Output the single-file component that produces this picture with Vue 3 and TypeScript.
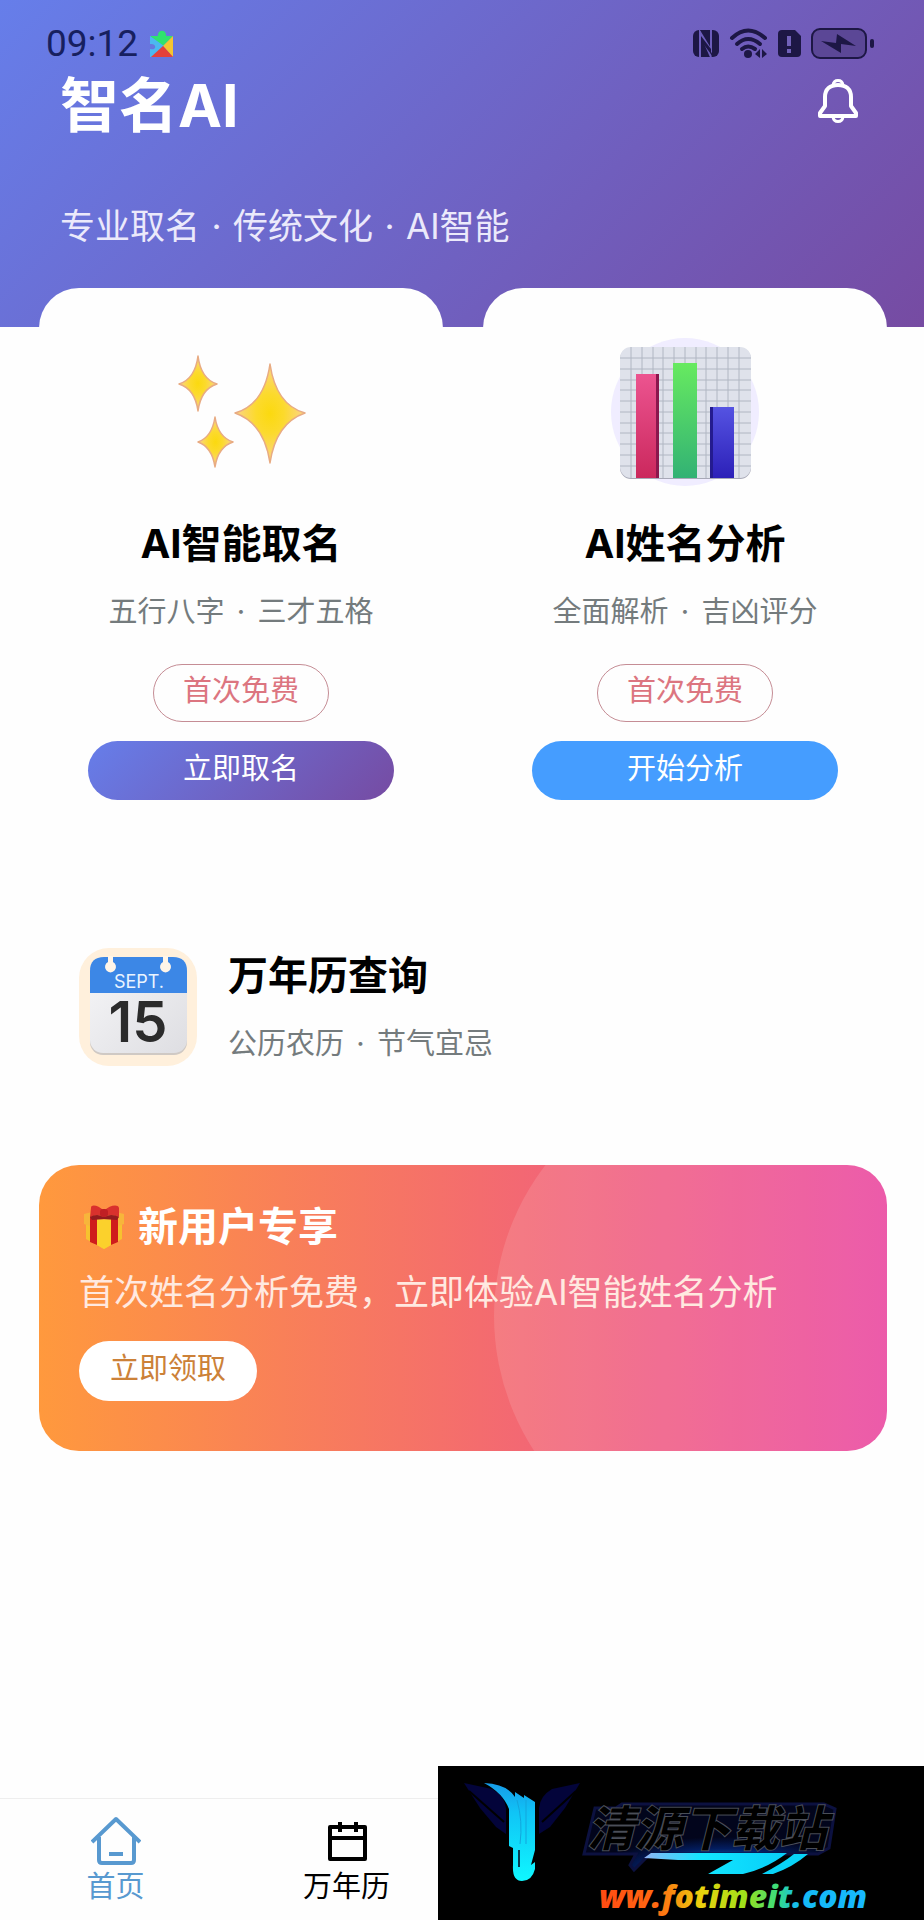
<script setup lang="ts">
interface Feature {
  id: 'naming' | 'analysis'
  title: string
  tags: [string, string]
  badge: string
  action: string
}

const slogan: string[] = ['专业取名', '传统文化', 'AI智能']

const features: Feature[] = [
  { id: 'naming', title: 'AI智能取名', tags: ['五行八字', '三才五格'], badge: '首次免费', action: '立即取名' },
  { id: 'analysis', title: 'AI姓名分析', tags: ['全面解析', '吉凶评分'], badge: '首次免费', action: '开始分析' },
]

const calendarTags: string[] = ['公历农历', '节气宜忌']

const gridLines: number[] = [12, 23, 34, 44, 55, 66, 77, 87, 98, 109, 120]
</script>

<template>
  <div class="page">
    <header class="hero">
      <div class="status">
        <span class="clock">09:12</span>
        <svg class="puzzle" viewBox="0 0 24 28" aria-hidden="true">
          <path d="M0 6H8C7-1 17-1 16 6H23L13 16 0 6Z" fill="#2fe36e" />
          <path d="M0 6 14 16 2 27H0V19C7 21 7 13 0 14Z" fill="#4cb8f0" />
          <path d="M23 6V27L13 16Z" fill="#f5c531" />
          <path d="M1 27 13 16 23 27Z" fill="#e5403b" />
        </svg>
        <svg class="indicators" viewBox="0 0 182 34" aria-hidden="true">
          <g fill="#1d1745">
            <rect x="0" y="3" width="26" height="27" rx="6" />
            <path d="M7 30V5L18 23V3M7 5 18 30" fill="none" stroke="#6c5dbb" stroke-width="2" />
            <path d="M8 9 18 22V27L8 14Z" />
            <g fill="none" stroke="#1d1745" stroke-width="4" stroke-linecap="round">
              <path d="M39 11Q55-4 72 11" />
              <path d="M44 17Q55 7 67 17" />
              <path d="M49 22Q55 17 62 22" />
            </g>
            <circle cx="55" cy="27" r="4" />
            <path d="M67 22V31L62 27ZM69 22V31L74 27Z" />
            <path d="M89 3H102L108 9V26Q108 30 104 30H89Q85 30 85 26V7Q85 3 89 3Z" />
            <path d="M96 9V19M96 22V26" stroke="#7161b9" stroke-width="4" />
            <rect x="119" y="2" width="54" height="29" rx="8" fill="#5b4796" stroke="#1d1745" stroke-width="2" />
            <path d="M128 14 143 16 144 7 163 19 148 17 148 26Z" />
            <rect x="177" y="12" width="4" height="9" rx="2" />
          </g>
        </svg>
      </div>
      <div class="hero-row">
        <h1>智名AI</h1>
        <button class="bell" type="button" aria-label="消息通知">
          <svg viewBox="0 0 40 46" aria-hidden="true">
            <g fill="none" stroke="#fff" stroke-width="4" stroke-linejoin="round">
              <path d="M7 19C7 11 12 7 20 7S33 11 33 19V28L38 35V38H2V35L7 28Z" />
              <path d="M15 7C16 1 24 1 25 7M15 39C16 45 24 45 25 39" stroke-width="3" />
            </g>
          </svg>
        </button>
      </div>
      <p class="slogan">
        <template v-for="(part, i) in slogan" :key="part"><span v-if="i" class="dot">·</span>{{ part }}</template>
      </p>
    </header>

    <main>
      <section class="features">
        <article v-for="f in features" :key="f.id" class="feature">
          <svg v-if="f.id === 'naming'" class="art" viewBox="0 0 148 148" aria-hidden="true">
            <defs>
              <radialGradient id="gold">
                <stop offset="0" stop-color="#fbd90f" />
                <stop offset=".4" stop-color="#fcda2c" />
                <stop offset="1" stop-color="#fbd48a" />
              </radialGradient>
            </defs>
            <g fill="url(#gold)" stroke="#e8ab83" stroke-width="1.5" stroke-linejoin="round">
              <path d="M103 26Q109 67 138 75Q109 85 103 125Q97 85 68 75Q97 67 103 26Z" />
              <path d="M31 18Q34 41 50 46Q34 51 31 73Q28 51 12 46Q28 41 31 18Z" />
              <path d="M48 79Q51 99 66 104Q51 109 48 129Q45 109 31 104Q45 99 48 79Z" />
            </g>
          </svg>
          <svg v-else class="art" viewBox="0 0 148 148" aria-hidden="true">
            <defs>
              <clipPath id="board"><rect x="9" y="9" width="131" height="131" rx="11" /></clipPath>
              <linearGradient id="red" x2="0" y2="1"><stop stop-color="#ec5490" /><stop offset="1" stop-color="#cb285d" /></linearGradient>
              <linearGradient id="green" x2="0" y2="1"><stop stop-color="#67ea60" /><stop offset="1" stop-color="#32b274" /></linearGradient>
              <linearGradient id="blue" x2="0" y2="1"><stop stop-color="#5553e2" /><stop offset="1" stop-color="#2c20b8" /></linearGradient>
            </defs>
            <circle cx="74" cy="74" r="74" fill="#f0edff" />
            <rect x="9" y="10" width="131" height="131" rx="11" fill="#a7a8b6" />
            <g clip-path="url(#board)">
              <rect x="9" y="9" width="131" height="131" fill="#dfe2eb" />
              <g stroke="#b0b6c2" stroke-width="1">
                <path v-for="n in gridLines" :key="n" :d="`M9 ${n + 8}H140M${n + 8} 9V140`" />
              </g>
              <path d="M26 36H48V140H26Z" fill="#8b174d" />
              <path d="M25 36H45V140H25Z" fill="url(#red)" />
              <path d="M62 25H86V140H62Z" fill="url(#green)" />
              <path d="M99 69H123V140H99Z" fill="#241b8f" />
              <path d="M102 69H123V140H102Z" fill="url(#blue)" />
            </g>
          </svg>
          <h2>{{ f.title }}</h2>
          <p class="tags">{{ f.tags[0] }}<span class="dot">·</span>{{ f.tags[1] }}</p>
          <span class="badge">{{ f.badge }}</span>
          <button class="action" :class="f.id" type="button">{{ f.action }}</button>
        </article>
      </section>

      <a class="almanac" href="#calendar">
        <svg class="date" viewBox="0 0 118 118" aria-hidden="true">
          <defs>
            <linearGradient id="paper" x2="1" y2="1"><stop stop-color="#f6f6f8" /><stop offset="1" stop-color="#dedee2" /></linearGradient>
          </defs>
          <rect width="118" height="118" rx="30" fill="#fff0dc" />
          <rect x="11" y="10" width="97" height="97" rx="13" fill="#cfc9c4" />
          <rect x="11" y="9" width="97" height="96" rx="13" fill="url(#paper)" />
          <path d="M11 45V23Q11 9 25 9H94Q108 9 108 23V45Z" fill="#3c87e6" />
          <path d="M29 8H34V14A5.500 5.500 0 1 1 29 14ZM84 8H89V14A5.500 5.500 0 1 1 84 14Z" fill="#fff5e8" />
          <text x="60" y="40" class="month">SEPT.</text>
          <text x="59" y="94" class="day">15</text>
        </svg>
        <div>
          <h2>万年历查询</h2>
          <p class="tags">{{ calendarTags[0] }}<span class="dot">·</span>{{ calendarTags[1] }}</p>
        </div>
      </a>

      <section class="banner">
        <h2>
          <svg class="gift" viewBox="0 0 42 46" aria-hidden="true">
            <path d="M3 19 21 24 39 19V35L21 45 3 35Z" fill="#f6c22f" />
            <path d="M1 10 21 5 41 10V20L21 27 1 20Z" fill="#f7b53b" />
            <path d="M7 12 14 14V41L7 38ZM28 14 35 12V38L28 41Z" fill="#cf1c1c" />
            <path d="M14 16H28V41L21 45 14 41Z" fill="#fbd12c" />
            <path d="M21 7C15 1 8 0 8 4L7 13Q14 10 21 12 29 10 36 13L36 4C35 0 27 1 21 7Z" fill="#d9312d" />
            <path d="M7 13Q14 9 21 13 28 9 36 13L34 16 21 15 9 16Z" fill="#941a1f" />
            <rect x="17" y="5" width="8" height="8" rx="3" fill="#c01f24" />
          </svg>
          新用户专享
        </h2>
        <p>首次姓名分析免费，立即体验AI智能姓名分析</p>
        <button type="button">立即领取</button>
      </section>
    </main>

    <nav class="tabs">
      <a class="current" href="#home" aria-current="page">
        <svg viewBox="0 0 50 50" aria-hidden="true">
          <g fill="none" stroke="currentColor" stroke-linejoin="round">
            <path d="M1 26 25 3 49 26M8 21V44Q8 47 11 47H40Q43 47 43 44V21" stroke-width="4" />
            <path d="M18 38H32" stroke-width="4" />
          </g>
        </svg>
        首页
      </a>
      <a href="#calendar">
        <svg viewBox="0 0 50 50" aria-hidden="true">
          <path d="M8 11H43V43H8ZM8 22H43M18 6V16M34 6V16" fill="none" stroke="currentColor" stroke-width="4" stroke-linejoin="round" />
        </svg>
        万年历
      </a>
    </nav>

    <aside class="sponsor">
      <svg viewBox="0 0 486 154" role="img" aria-label="清源下载站">
        <defs>
          <linearGradient id="ice" x2="0" y2="1"><stop stop-color="#169be8" /><stop offset=".3" stop-color="#10c4f6" /><stop offset="1" stop-color="#0ff8ff" /></linearGradient>
          <radialGradient id="glow" cx=".56" cy="1" r=".5">
            <stop stop-color="#45d0ff" /><stop offset=".25" stop-color="#0a62b8" /><stop offset=".65" stop-color="#031d5f" /><stop offset="1" stop-color="#02051c" />
          </radialGradient>
          <linearGradient id="swoosh"><stop stop-color="#8fb4f5" /><stop offset=".4" stop-color="#12e6ff" /><stop offset="1" stop-color="#08cdf8" /></linearGradient>
          <linearGradient id="rainbow">
            <stop stop-color="#ff4a12" /><stop offset=".22" stop-color="#ff6a12" /><stop offset=".38" stop-color="#ecd10c" />
            <stop offset=".55" stop-color="#9be21b" /><stop offset=".67" stop-color="#35dc83" /><stop offset=".74" stop-color="#14baf5" /><stop offset="1" stop-color="#18b8ff" />
          </linearGradient>
        </defs>
        <g fill="#03043a">
          <path d="M26 17 54 23Q67 30 68 42V68L58 61 42 42Z" />
          <path d="M142 17 114 23Q102 30 101 42V68L112 61 127 42Z" />
          <path d="M31 25 66 56M138 25 104 56" stroke="#000" stroke-width="2" />
        </g>
        <path d="M46 17Q69 18 77 31V26L86 32V29L97 36V84L93 99 97 96V103Q94 115 84 115T75 99V82L71 80V43Q65 27 46 17Z" fill="url(#ice)" />
        <path d="M81 84V101" fill="none" stroke="#053c50" stroke-width="2" />
        <path d="M79 34Q85 55 82 78M88 34V78" fill="none" stroke="#13a5dc" stroke-width="1" />
        <path d="M157 42H178L184 38H386L397 43 391 82 380 88H212L196 104 192 99 198 88H146Z" fill="url(#glow)" stroke="#0c1140" stroke-width="3" />
        <path d="M206 92 213 87H349Q330 102 305 108H270L295 94H240Z" fill="url(#swoosh)" />
        <path d="M324 108Q345 97 356 88H370Q355 101 335 108Z" fill="#08d3f8" />
        <text x="149" y="80" class="site">清源下载站</text>
        <text x="161" y="142" class="domain">ww.fotimeit.com</text>
      </svg>
    </aside>
  </div>
</template>

<style>
body {
  margin: 0;
  background: #fefefe;
}
</style>

<style scoped>
.page {
  position: relative;
  display: flex;
  flex-direction: column;
  min-height: 100vh;
  background: #fefefe;
  color: #000;
  font-family: Inter, "Noto Sans CJK SC", sans-serif;
}
h1, h2, p {
  margin: 0;
}
button {
  border: 0;
  padding: 0;
  font-family: inherit;
}
a {
  color: inherit;
  text-decoration: none;
}
.hero {
  box-sizing: border-box;
  height: 327px;
  padding: 24px 60px 0;
  background: linear-gradient(135deg, #667eea, #764ba2);
  color: #fff;
}
.status {
  display: flex;
  align-items: center;
  height: 40px;
  margin: 0 -11px 0 -14px;
}
.clock {
  color: #17205f;
  font: 400 37px/40px Roboto, sans-serif;
}
.puzzle {
  width: 24px;
  height: 28px;
  margin-left: 12px;
}
.indicators {
  width: 182px;
  height: 34px;
  margin-left: auto;
}
.hero-row {
  display: flex;
  align-items: center;
  justify-content: space-between;
  height: 84px;
}
h1 {
  font-size: 59px;
  line-height: 84px;
  font-weight: 700;
}
.bell {
  width: 40px;
  height: 46px;
  margin: 0 6px 10px 0;
  background: none;
}
.bell svg {
  display: block;
}
.slogan {
  margin-top: 52px;
  font-size: 35px;
  line-height: 52px;
  color: #ebe9fb;
}
.dot {
  display: inline-block;
  width: 33px;
  text-align: center;
}
.features {
  display: grid;
  grid-template-columns: 1fr 1fr;
  gap: 40px;
  margin: -39px 37px 0 39px;
}
.feature {
  display: flex;
  flex-direction: column;
  align-items: center;
  padding: 50px 49px;
  border-radius: 40px;
  background: #fefefe;
}
.art {
  width: 148px;
  height: 148px;
}
h2 {
  font-size: 40px;
  line-height: 56px;
  font-weight: 700;
}
.feature h2 {
  margin-top: 30px;
}
.tags {
  color: #747b7d;
  font-size: 29px;
  line-height: 44px;
}
.feature .tags {
  margin-top: 18px;
}
.badge {
  box-sizing: border-box;
  height: 58px;
  margin-top: 30px;
  padding: 0 29px;
  border: 1px solid #c58d95;
  border-radius: 29px;
  color: #dc7580;
  font-size: 29px;
  line-height: 52px;
}
.action {
  align-self: stretch;
  height: 59px;
  margin-top: 19px;
  padding-bottom: 4px;
  border-radius: 30px;
  color: #fff;
  font-size: 29px;
  line-height: 55px;
}
.action.naming {
  background: linear-gradient(135deg, #667eea, #764ba2);
}
.action.analysis {
  background: #459dff;
}
.almanac {
  display: flex;
  align-items: center;
  gap: 31px;
  margin: 98px 79px 0;
}
.almanac .tags {
  margin-top: 18px;
}
.date {
  width: 118px;
  height: 118px;
}
.month {
  fill: #eaf4ff;
  font: 400 18px Inter, sans-serif;
  text-anchor: middle;
}
.day {
  fill: #2b2b2b;
  font: 600 56px Inter, sans-serif;
  text-anchor: middle;
}
.banner {
  position: relative;
  overflow: hidden;
  margin: 99px 37px 0 39px;
  padding: 34px 40px 50px;
  border-radius: 40px;
  background: linear-gradient(90deg, #ff993d, #f46c6e 52%, #ea459f);
  color: #fff;
}
.banner::before {
  content: "";
  position: absolute;
  top: -96px;
  right: -101px;
  width: 494px;
  height: 494px;
  border-radius: 50%;
  background: rgba(255, 255, 255, 0.12);
}
.banner > * {
  position: relative;
}
.banner h2 {
  display: flex;
  align-items: center;
  gap: 13px;
}
.gift {
  width: 42px;
  height: 46px;
  margin-left: 4px;
}
.banner p {
  margin-top: 11px;
  font-size: 35px;
  line-height: 52px;
  color: #ffe9e0;
}
.banner button {
  display: block;
  height: 60px;
  margin-top: 23px;
  padding: 0 31px 4px;
  border-radius: 30px;
  background: #fff;
  color: #cc8138;
  font-size: 29px;
  line-height: 56px;
}
.tabs {
  display: grid;
  grid-template-columns: repeat(4, 1fr);
  height: 121px;
  margin-top: auto;
  border-top: 1px solid #eee;
}
.tabs a {
  display: flex;
  flex-direction: column;
  align-items: center;
  padding-top: 17px;
  font-size: 29px;
  line-height: 42px;
}
.tabs svg {
  width: 50px;
  height: 50px;
}
.tabs .current {
  color: #5899d0;
}
.sponsor {
  position: absolute;
  right: 0;
  bottom: 0;
  width: 486px;
  height: 154px;
  background: #000;
}
.sponsor svg {
  display: block;
}
.site {
  fill: #000;
  stroke: #4a4e58;
  stroke-width: 2px;
  paint-order: stroke;
  font: italic 700 48px "Noto Sans CJK SC", sans-serif;
}
.domain {
  fill: url(#rainbow);
  font: italic 800 32px "Open Sans", sans-serif;
}
</style>
